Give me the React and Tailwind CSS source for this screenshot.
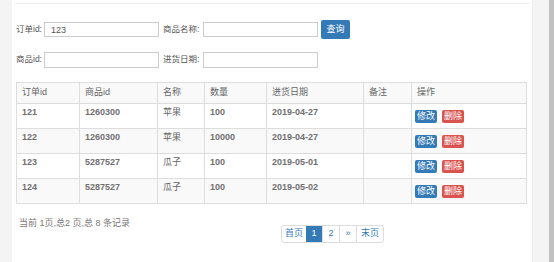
import React from "react";

const rows = [
  { id: "121", gid: "1260300", name: "苹果", qty: "100", date: "2019-04-27" },
  { id: "122", gid: "1260300", name: "苹果", qty: "10000", date: "2019-04-27" },
  { id: "123", gid: "5287527", name: "瓜子", qty: "100", date: "2019-05-01" },
  { id: "124", gid: "5287527", name: "瓜子", qty: "100", date: "2019-05-02" },
];

const cols = [
  { label: "订单id", w: "w-[63px]" },
  { label: "商品id", w: "w-[78px]" },
  { label: "名称", w: "w-[47px]" },
  { label: "数量", w: "w-[62px]" },
  { label: "进货日期", w: "w-[97px]" },
  { label: "备注", w: "w-[48px]" },
  { label: "操作", w: "w-[115px]" },
];

const font = { fontFamily: '"Liberation Sans", "Noto Sans CJK SC", sans-serif' };

export default function App() {
  return (
    <div className="flex h-[262px] w-[554px] overflow-hidden bg-white text-[9px]" style={font}>
      <div className="w-[12px] shrink-0 bg-[#f4f4f4]" />

      <div className="flex w-[520px] shrink-0 flex-col">
        <div className="ml-[3px] mr-[2px] mt-[3px] h-px bg-[#eeeeee]" />

        {/* search form */}
        <div className="mt-[16px] flex h-[19px] items-center pl-[4px]">
          <label className="w-[28px] shrink-0 whitespace-nowrap text-[8.5px] text-[#555]">订单id:</label>
          <input
            defaultValue="123"
            className="h-[15px] w-[115px] shrink-0 border border-[#ccc] px-[6px] text-[9px] text-[#555] outline-none"
          />
          <label className="ml-[4px] w-[40px] shrink-0 whitespace-nowrap text-[8.5px] text-[#555]">商品名称:</label>
          <input className="h-[15px] w-[115px] shrink-0 border border-[#ccc] outline-none" />
          <button className="ml-[3px] h-[19px] w-[29px] shrink-0 rounded-[2px] bg-[#337ab7] text-[9px] text-white">
            查询
          </button>
        </div>
        <div className="mt-[12px] flex h-[17px] items-center pl-[4px]">
          <label className="w-[28px] shrink-0 whitespace-nowrap text-[8.5px] text-[#555]">商品id:</label>
          <input className="h-[16px] w-[115px] shrink-0 border border-[#ccc] outline-none" />
          <label className="ml-[4px] w-[40px] shrink-0 whitespace-nowrap text-[8.5px] text-[#555]">进货日期:</label>
          <input className="h-[16px] w-[115px] shrink-0 border border-[#ccc] outline-none" />
        </div>

        {/* table */}
        <table className="ml-[4px] mt-[14px] w-[510px] table-fixed border-collapse border border-[#ddd]">
          <thead>
            <tr className="h-[21px] bg-[#f9f9f9]">
              {cols.map((c) => (
                <th
                  key={c.label}
                  className={`${c.w} border border-[#ddd] px-[5px] text-left align-middle font-normal text-[#666]`}
                >
                  {c.label}
                </th>
              ))}
            </tr>
          </thead>
          <tbody>
            {rows.map((r, i) => (
              <tr key={r.id} className={i % 2 === 1 ? "bg-[#f9f9f9]" : "bg-white"}>
                <td className="h-[25px] border border-[#ddd] px-[5px] pt-[2px] align-top font-bold text-[#707070]">{r.id}</td>
                <td className="border border-[#ddd] px-[5px] pt-[2px] align-top font-bold text-[#707070]">{r.gid}</td>
                <td className="border border-[#ddd] px-[5px] pt-[2px] align-top text-[#666]">{r.name}</td>
                <td className="border border-[#ddd] px-[5px] pt-[2px] align-top font-bold text-[#707070]">{r.qty}</td>
                <td className="border border-[#ddd] px-[5px] pt-[2px] align-top font-bold text-[#707070]">{r.date}</td>
                <td className="border border-[#ddd] px-[5px]" />
                <td className="border border-[#ddd] px-[3px] pt-[6px] align-top">
                  <div className="flex gap-[5px]">
                    <button className="h-[13px] w-[22px] rounded-[2px] bg-[#337ab7] text-[9px] leading-[13px] text-white">修改</button>
                    <button className="h-[13px] w-[22px] rounded-[2px] bg-[#d9534f] text-[9px] leading-[13px] text-white">删除</button>
                  </div>
                </td>
              </tr>
            ))}
          </tbody>
        </table>

        {/* footer */}
        <div className="ml-[4px] mt-[13px] flex w-[510px]">
          <div className="w-[255px] pl-[3px] text-[#777]">当前 1页,总2 页,总 8 条记录</div>
          <div className="flex pl-[10px] pt-[8px]">
            <div className="flex h-[18px] overflow-hidden rounded-[3px] border border-[#ddd] text-[#337ab7]">
              <span className="flex w-[24px] items-center justify-center">首页</span>
              <span className="flex w-[16px] items-center justify-center bg-[#337ab7] text-white">1</span>
              <span className="flex w-[17px] items-center justify-center border-l border-[#ddd]">2</span>
              <span className="flex w-[17px] items-center justify-center border-l border-[#ddd]">»</span>
              <span className="flex w-[27px] items-center justify-center border-l border-[#ddd]">末页</span>
            </div>
          </div>
        </div>
      </div>

      <div className="w-[17px] shrink-0 border-l border-[#eee] bg-[#f4f4f4]" />
      <div className="w-[5px] shrink-0 bg-[#c1c1c1]" />
    </div>
  );
}
